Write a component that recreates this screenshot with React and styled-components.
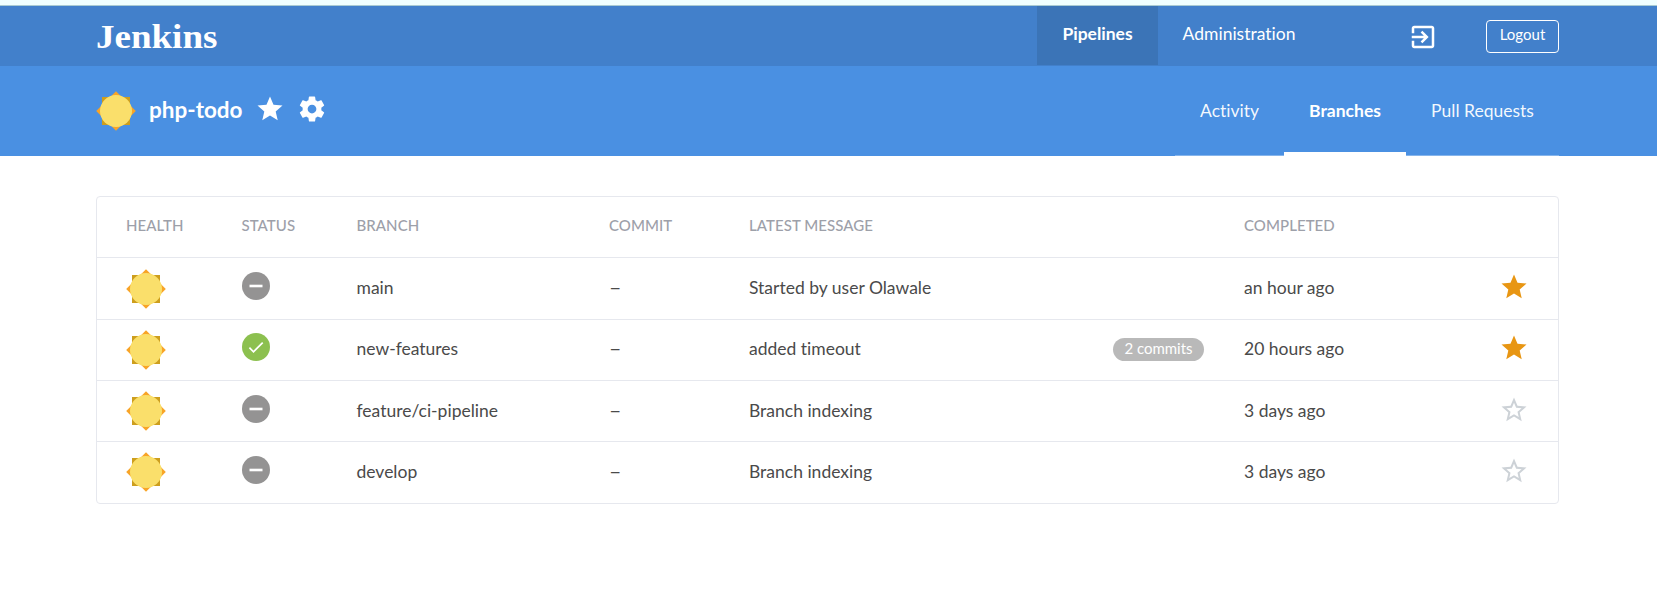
import React from "react";
import styled, { createGlobalStyle } from "styled-components";

const GlobalStyle = createGlobalStyle`
  * { box-sizing: border-box; }
  body {
    margin: 0;
    background: #fff;
    font-family: Lato, "Liberation Sans", sans-serif;
    font-size: 17.5px;
    font-variant-ligatures: none;
    color: #4a4a4a;
  }
  svg { display: block; flex: none; }
`;

const TopStrip = styled.div`
  height: 6px;
  background: #f0ffff;
  border-bottom: 1px solid #a9cbd3;
`;

const Header = styled.header`
  display: flex;
  justify-content: space-between;
  height: 60px;
  padding: 0 98px 0 96px;
  background: #4280cb;
  color: #fff;
`;

const Brand = styled.div`
  padding-top: 11px;
  font: bold 33.5px/40px "Liberation Serif", serif;
  transform: scaleX(1.105);
  transform-origin: left;
`;

const HeaderRight = styled.div`
  display: flex;
  align-items: flex-start;
`;

const NavLink = styled.a`
  height: 59px;
  padding-top: 15px;
  width: ${(p) => p.$width}px;
  text-align: center;
  line-height: 26px;
  font-weight: ${(p) => (p.$active ? 700 : 400)};
  background: ${(p) => (p.$active ? "#3b74b7" : "transparent")};
`;

const ExitIcon = styled.svg`
  margin: 16px 48px 0 88px;
`;

const LogoutButton = styled.button`
  width: 73px;
  height: 33px;
  margin-top: 14px;
  padding: 0 0 5px;
  border: 1px solid #fff;
  border-radius: 4px;
  background: transparent;
  color: #fff;
  font: 400 15px/26px Lato, sans-serif;
`;

const SubHeader = styled.section`
  display: flex;
  justify-content: space-between;
  height: 90px;
  padding: 0 98px 0 96px;
  background: #4a90e2;
  color: #fff;
`;

const Title = styled.div`
  display: flex;
  align-items: center;
  height: 90px;
`;

const PipelineName = styled.h1`
  margin: 0 10px 2px 13px;
  width: 96px;
  white-space: nowrap;
  font-size: 22.5px;
  line-height: 28px;
  font-weight: 700;
`;

const TitleIcons = styled.div`
  display: flex;
  gap: 12px;
  padding-bottom: 4px;
`;

const Tabs = styled.nav`
  display: flex;
`;

const Tab = styled.a`
  width: ${(p) => p.$width}px;
  padding-top: 32px;
  text-align: center;
  line-height: 26px;
  font-weight: ${(p) => (p.$active ? 700 : 400)};
  color: ${(p) => (p.$active ? "#fff" : "rgba(255,255,255,0.94)")};
  border-bottom: ${(p) => (p.$active ? "4px solid #fff" : "1px solid #86b5ec")};
`;

const Table = styled.div`
  width: 1463px;
  margin: 40px 0 0 96px;
  border: 1px solid #e6e8ee;
  border-radius: 4px;
`;

const Row = styled.div`
  display: grid;
  grid-template-columns: 115.5px 115px 252.5px 140px 495px 255px 30px;
  height: ${(p) => p.$height}px;
  padding-left: 29px;
  border-top: 1px solid #e6e8ee;
  &:first-child { border-top: 0; }
`;

const HeadCell = styled.div`
  padding-top: 16px;
  font-size: 15px;
  line-height: 24px;
  color: #9da0a9;
  font-family: "Lato Medium", Lato, sans-serif;
  font-weight: 500;
  letter-spacing: 0.06px;
`;

const TextCell = styled.div`
  display: flex;
  justify-content: space-between;
  padding-top: ${(p) => p.$top}px;
  line-height: 26px;
`;

const Dash = styled.span`
  transform: scaleX(1.22);
  transform-origin: left;
`;

const IconCell = styled.div`
  padding-top: ${(p) => p.$top}px;
`;

const Commits = styled.span`
  width: 91px;
  height: 23px;
  margin: 2px 40px 0 0;
  border-radius: 12px;
  background: #b9b9b9;
  color: #fff;
  font-size: 15px;
  line-height: 21px;
  text-align: center;
`;

const STAR = "M12 17.27L18.18 21l-1.64-7.03L22 9.24l-7.19-.61L12 2 9.19 8.63 2 9.24l5.46 4.73L5.82 21z";
const STAR_OUTLINE =
  "M22 9.24l-7.19-.62L12 2 9.19 8.63 2 9.24l5.46 4.73L5.82 21 12 17.27 18.18 21l-1.63-7.03L22 9.24zM12 15.4l-3.76 2.27 1-4.28-3.32-2.88 4.38-.38L12 6.1l1.71 4.04 4.38.38-3.32 2.88 1 4.28L12 15.4z";
const GEAR =
  "M19.43 12.98c.04-.32.07-.64.07-.98s-.03-.66-.07-.98l2.11-1.65c.19-.15.24-.42.12-.64l-2-3.46c-.12-.22-.39-.3-.61-.22l-2.49 1c-.52-.4-1.08-.73-1.69-.98l-.38-2.65C14.46 2.18 14.25 2 14 2h-4c-.25 0-.46.18-.49.42l-.38 2.65c-.61.25-1.17.59-1.69.98l-2.49-1c-.23-.09-.49 0-.61.22l-2 3.46c-.13.22-.07.49.12.64l2.11 1.65c-.04.32-.07.65-.07.98s.03.66.07.98l-2.11 1.65c-.19.15-.24.42-.12.64l2 3.46c.12.22.39.3.61.22l2.49-1c.52.4 1.08.73 1.69.98l.38 2.65c.03.24.24.42.49.42h4c.25 0 .46-.18.49-.42l.38-2.65c.61-.25 1.17-.59 1.69-.98l2.49 1c.23.09.49 0 .61-.22l2-3.46c.12-.22.07-.49-.12-.64l-2.11-1.65zM12 15.5c-1.93 0-3.5-1.57-3.5-3.5s1.57-3.5 3.5-3.5 3.5 1.57 3.5 3.5-1.57 3.5-3.5 3.5z";
const EXIT =
  "M10.09 15.59L11.5 17l5-5-5-5-1.41 1.41L12.67 11H3v2h9.67l-2.58 2.59zM19 3H5c-1.11 0-2 .9-2 2v4h2V5h14v14H5v-4H3v4c0 1.1.89 2 2 2h14c1.1 0 2-.9 2-2V5c0-1.1-.9-2-2-2z";

const MaterialIcon = ({ d, fill = "#fff", size = 30 }) => (
  <svg width={size} height={size} viewBox="0 0 24 24" fill={fill}>
    <path d={d} />
  </svg>
);

const Sun = () => (
  <svg width="40" height="40" viewBox="0 0 40 40">
    <path d="M6 6h28v28H6z" fill="#cd9e1d" />
    <path d="M20 0.2L39.8 20 20 39.8 0.2 20z" fill="#f8a427" />
    <circle cx="20" cy="20" r="16" fill="#fadf6b" />
  </svg>
);

const Status = ({ success }) => (
  <svg width="28" height="28" viewBox="0 0 28 28">
    <circle cx="14" cy="14" r="14" fill={success ? "#8cc04f" : "#949393"} />
    {success ? (
      <path d="M7.4 14.7l4.1 4.1 9.2-9.2" fill="none" stroke="#fff" strokeWidth="1.7" />
    ) : (
      <path d="M7.5 12.7h13v2.6h-13z" fill="#fff" />
    )}
  </svg>
);

const branches = [
  { name: "main", message: "Started by user Olawale", completed: "an hour ago", favorite: true, height: 62, sunTop: 11, lift: 0 },
  { name: "new-features", message: "added timeout", commits: "2 commits", completed: "20 hours ago", favorite: true, success: true, height: 61, sunTop: 10, lift: 1 },
  { name: "feature/ci-pipeline", message: "Branch indexing", completed: "3 days ago", height: 61, sunTop: 10, lift: 0 },
  { name: "develop", message: "Branch indexing", completed: "3 days ago", height: 62, sunTop: 10, lift: 0 },
];

export default function App() {
  return (
    <>
      <GlobalStyle />
      <TopStrip />
      <Header>
        <Brand>Jenkins</Brand>
        <HeaderRight>
          <NavLink $active $width={121}>Pipelines</NavLink>
          <NavLink $width={162}>Administration</NavLink>
          <ExitIcon width="30" height="30" viewBox="0 0 24 24" fill="#fff">
            <path d={EXIT} />
          </ExitIcon>
          <LogoutButton>Logout</LogoutButton>
        </HeaderRight>
      </Header>
      <SubHeader>
        <Title>
          <Sun />
          <PipelineName>php-todo</PipelineName>
          <TitleIcons>
            <MaterialIcon d={STAR} />
            <MaterialIcon d={GEAR} />
          </TitleIcons>
        </Title>
        <Tabs>
          <Tab $width={109}>Activity</Tab>
          <Tab $active $width={122}>Branches</Tab>
          <Tab $width={153}>Pull Requests</Tab>
        </Tabs>
      </SubHeader>
      <Table>
        <Row $height={60}>
          <HeadCell>HEALTH</HeadCell>
          <HeadCell>STATUS</HeadCell>
          <HeadCell>BRANCH</HeadCell>
          <HeadCell>COMMIT</HeadCell>
          <HeadCell>LATEST MESSAGE</HeadCell>
          <HeadCell>COMPLETED</HeadCell>
        </Row>
        {branches.map((b) => (
          <Row key={b.name} $height={b.height}>
            <IconCell $top={b.sunTop}><Sun /></IconCell>
            <IconCell $top={14 - b.lift}><Status success={b.success} /></IconCell>
            <TextCell $top={17 - b.lift}>{b.name}</TextCell>
            <TextCell $top={17 - b.lift}><Dash>–</Dash></TextCell>
            <TextCell $top={17 - b.lift}>
              {b.message}
              {b.commits && <Commits>{b.commits}</Commits>}
            </TextCell>
            <TextCell $top={17 - b.lift}>{b.completed}</TextCell>
            <IconCell $top={13.5 - b.lift}>
              <MaterialIcon
                d={b.favorite ? STAR : STAR_OUTLINE}
                fill={b.favorite ? "#e89613" : "#cdd2d7"}
              />
            </IconCell>
          </Row>
        ))}
      </Table>
    </>
  );
}
